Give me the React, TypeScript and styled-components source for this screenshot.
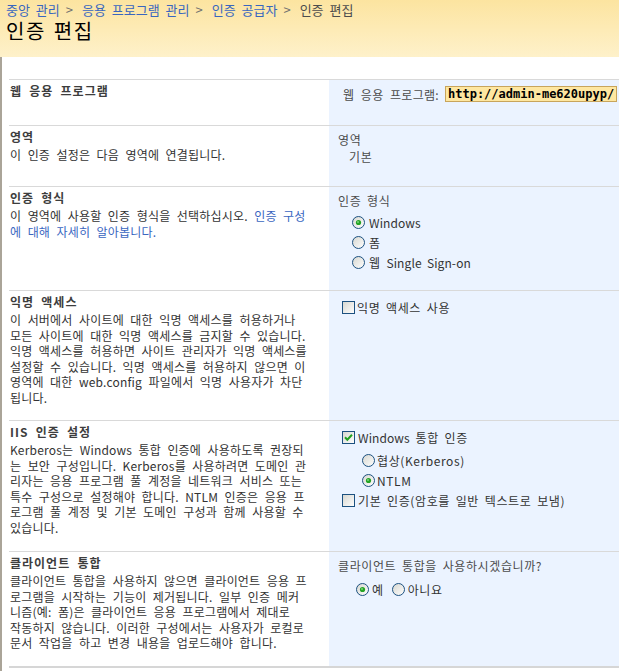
import React from 'react';
import styled, { createGlobalStyle } from 'styled-components';

const GlobalStyle = createGlobalStyle`
  body {
    margin: 0;
    background: #ffffff;
    font-family: "Noto Sans CJK KR", "Noto Sans", sans-serif;
    font-size: 12px;
    letter-spacing: 0.2px;
    word-spacing: 3.5px;
    color: #333333;
  }
`;

const Header = styled.div`
  height: 57px;
  box-sizing: border-box;
  padding-left: 6px;
  background: linear-gradient(to bottom, #fce4a0 0%, #fef1ca 100%);
`;

const Crumbs = styled.div`
  display: flex;
  align-items: center;
  height: 19px;
  font-size: 13px;
  line-height: 15px;
  letter-spacing: 0;
  word-spacing: 3px;
  white-space: nowrap;
`;

const CrumbLink = styled.a`
  color: #3966bf;
  text-decoration: none;
`;

const CrumbSep = styled.span`
  color: #6f6f6f;
  margin: 0 9px 0 6px;
`;

const CrumbCurrent = styled.span`
  color: #4c4c4c;
`;

const PageTitle = styled.div`
  font-size: 20px;
  line-height: 24px;
  letter-spacing: 1.5px;
  word-spacing: 2px;
  color: #000000;
`;

const Main = styled.div`
  border-left: 2px solid #aaa498;
  padding: 22px 0 6px 7px;
`;

const Section = styled.div<{ $h: number }>`
  display: grid;
  grid-template-columns: 320px 1fr;
  height: ${({ $h }) => $h}px;
  box-sizing: border-box;
  border-top: 1px solid #d9d9d9;
`;

const LeftCell = styled.div`
  padding: 3px 0 0 1px;
`;

const Heading = styled.div`
  font-weight: bold;
  line-height: 15px;
  letter-spacing: 1px;
  color: #3d3d3d;
  margin-bottom: 3px;
`;

const Desc = styled.div`
  line-height: 15.5px;
  white-space: nowrap;
  color: #333333;
`;

const Link = styled.a`
  color: #3966bf;
  text-decoration: none;
`;

const RightCell = styled.div`
  background: #ebf3ff;
  padding: 6px 0 0 9px;
  letter-spacing: 0.6px;
  word-spacing: 2.5px;
  overflow: hidden;
`;

const Latin = styled.span`
  letter-spacing: 0.1px;
`;

const Label = styled.div`
  line-height: 15px;
  color: #4c4c4c;
  white-space: nowrap;
`;

const Indent = styled.div`
  line-height: 15px;
  margin-top: 2px;
  padding-left: 11px;
  color: #4c4c4c;
`;

const UrlRow = styled.div`
  display: flex;
  align-items: center;
  height: 16px;
  padding-left: 5px;
  white-space: nowrap;
  color: #4c4c4c;
  letter-spacing: 0.3px;
  word-spacing: 3.5px;
`;

const UrlBox = styled.span`
  margin-left: 6px;
  height: 16px;
  box-sizing: border-box;
  padding: 0 2px;
  border: 1px solid #c8a55c;
  background: #fee7a1;
  font-family: "DejaVu Sans Mono", monospace;
  font-weight: bold;
  font-size: 12px;
  line-height: 14px;
  letter-spacing: 0;
  color: #000000;
`;

const OptionGroup = styled.div<{ $indent: number; $top: number }>`
  padding-left: ${({ $indent }) => $indent}px;
  margin-top: ${({ $top }) => $top}px;
`;

const OptionRow = styled.div<{ $gap?: number }>`
  display: flex;
  align-items: center;
  height: 20px;
  gap: ${({ $gap }) => $gap ?? 4}px;
  white-space: nowrap;
  color: #333333;
`;

const InlineOptions = styled.div`
  display: flex;
  align-items: center;
  gap: 8px;
`;

const BottomRule = styled.div`
  border-top: 2px solid #d6d6d6;
`;

function Radio({ checked }: { checked?: boolean }) {
  return (
    <svg width="13" height="13" viewBox="0 0 13 13">
      <defs>
        <linearGradient id="radioFill" x1="0" y1="0" x2="1" y2="1">
          <stop offset="0" stopColor="#d6d6cf" />
          <stop offset="1" stopColor="#ffffff" />
        </linearGradient>
      </defs>
      <circle cx="6.5" cy="6.5" r="6" fill="url(#radioFill)" stroke="#1c5180" />
      {checked && (
        <>
          <circle cx="6.5" cy="6.5" r="2.6" fill="#24a324" />
          <circle cx="6" cy="6" r="1" fill="#7ad67a" />
        </>
      )}
    </svg>
  );
}

function Check({ checked }: { checked?: boolean }) {
  return (
    <svg width="13" height="13" viewBox="0 0 13 13">
      <defs>
        <linearGradient id="checkFill" x1="0" y1="0" x2="1" y2="1">
          <stop offset="0" stopColor="#d6d6cf" />
          <stop offset="1" stopColor="#ffffff" />
        </linearGradient>
      </defs>
      <rect x="0.5" y="0.5" width="12" height="12" fill="url(#checkFill)" stroke="#1c5180" />
      {checked && (
        <path d="M3 6.3 L5.3 8.7 L10 3.8" fill="none" stroke="#21a121" strokeWidth="2" />
      )}
    </svg>
  );
}

export default function App() {
  return (
    <>
      <GlobalStyle />
      <Header>
        <Crumbs>
          <CrumbLink>중앙 관리</CrumbLink>
          <CrumbSep>&gt;</CrumbSep>
          <CrumbLink>응용 프로그램 관리</CrumbLink>
          <CrumbSep>&gt;</CrumbSep>
          <CrumbLink>인증 공급자</CrumbLink>
          <CrumbSep>&gt;</CrumbSep>
          <CrumbCurrent>인증 편집</CrumbCurrent>
        </Crumbs>
        <PageTitle>인증 편집</PageTitle>
      </Header>

      <Main>
        <Section $h={46}>
          <LeftCell>
            <Heading>웹 응용 프로그램</Heading>
          </LeftCell>
          <RightCell>
            <UrlRow>
              웹 응용 프로그램:
              <UrlBox>http://admin-me620upyp/</UrlBox>
            </UrlRow>
          </RightCell>
        </Section>

        <Section $h={61}>
          <LeftCell>
            <Heading>영역</Heading>
            <Desc>이 인증 설정은 다음 영역에 연결됩니다.</Desc>
          </LeftCell>
          <RightCell>
            <Label>영역</Label>
            <Indent>기본</Indent>
          </RightCell>
        </Section>

        <Section $h={104}>
          <LeftCell>
            <Heading>인증 형식</Heading>
            <Desc>
              이 영역에 사용할 인증 형식을 선택하십시오. <Link>인증 구성</Link>
              <br />
              <Link>에 대해 자세히 알아봅니다.</Link>
            </Desc>
          </LeftCell>
          <RightCell>
            <Label>인증 형식</Label>
            <OptionGroup $indent={14} $top={4}>
              <OptionRow>
                <Radio checked />
                <Latin>Windows</Latin>
              </OptionRow>
              <OptionRow>
                <Radio />폼
              </OptionRow>
              <OptionRow>
                <Radio />
                <span>
                  웹 <Latin>Single Sign-on</Latin>
                </span>
              </OptionRow>
            </OptionGroup>
          </RightCell>
        </Section>

        <Section $h={130}>
          <LeftCell>
            <Heading>익명 액세스</Heading>
            <Desc>
              이 서버에서 사이트에 대한 익명 액세스를 허용하거나
              <br />
              모든 사이트에 대한 익명 액세스를 금지할 수 있습니다.
              <br />
              익명 액세스를 허용하면 사이트 관리자가 익명 액세스를
              <br />
              설정할 수 있습니다. 익명 액세스를 허용하지 않으면 이
              <br />
              영역에 대한 web.config 파일에서 익명 사용자가 차단
              <br />
              됩니다.
            </Desc>
          </LeftCell>
          <RightCell>
            <OptionGroup $indent={4} $top={0}>
              <OptionRow $gap={2}>
                <Check />
                익명 액세스 사용
              </OptionRow>
            </OptionGroup>
          </RightCell>
        </Section>

        <Section $h={131}>
          <LeftCell>
            <Heading>IIS 인증 설정</Heading>
            <Desc>
              Kerberos는 Windows 통합 인증에 사용하도록 권장되
              <br />
              는 보안 구성입니다. Kerberos를 사용하려면 도메인 관
              <br />
              리자는 응용 프로그램 풀 계정을 네트워크 서비스 또는
              <br />
              특수 구성으로 설정해야 합니다. NTLM 인증은 응용 프
              <br />
              로그램 풀 계정 및 기본 도메인 구성과 함께 사용할 수
              <br />
              있습니다.
            </Desc>
          </LeftCell>
          <RightCell>
            <OptionGroup $indent={4} $top={0}>
              <OptionRow $gap={3}>
                <Check checked />
                <span>
                  <Latin>Windows</Latin> 통합 인증
                </span>
              </OptionRow>
            </OptionGroup>
            <OptionGroup $indent={24} $top={3}>
              <OptionRow $gap={2}>
                <Radio />
                협상(Kerberos)
              </OptionRow>
              <OptionRow $gap={2}>
                <Radio checked />
                NTLM
              </OptionRow>
            </OptionGroup>
            <OptionGroup $indent={4} $top={0}>
              <OptionRow $gap={3}>
                <Check />
                기본 인증(암호를 일반 텍스트로 보냄)
              </OptionRow>
            </OptionGroup>
          </RightCell>
        </Section>

        <Section $h={115}>
          <LeftCell>
            <Heading>클라이언트 통합</Heading>
            <Desc>
              클라이언트 통합을 사용하지 않으면 클라이언트 응용 프
              <br />
              로그램을 시작하는 기능이 제거됩니다. 일부 인증 메커
              <br />
              니즘(예: 폼)은 클라이언트 응용 프로그램에서 제대로
              <br />
              작동하지 않습니다. 이러한 구성에서는 사용자가 로컬로
              <br />
              문서 작업을 하고 변경 내용을 업로드해야 합니다.
            </Desc>
          </LeftCell>
          <RightCell>
            <Label>클라이언트 통합을 사용하시겠습니까?</Label>
            <OptionGroup $indent={18} $top={6}>
              <InlineOptions>
                <OptionRow $gap={3}>
                  <Radio checked />예
                </OptionRow>
                <OptionRow $gap={3}>
                  <Radio />
                  아니요
                </OptionRow>
              </InlineOptions>
            </OptionGroup>
          </RightCell>
        </Section>
        <BottomRule />
      </Main>
    </>
  );
}
